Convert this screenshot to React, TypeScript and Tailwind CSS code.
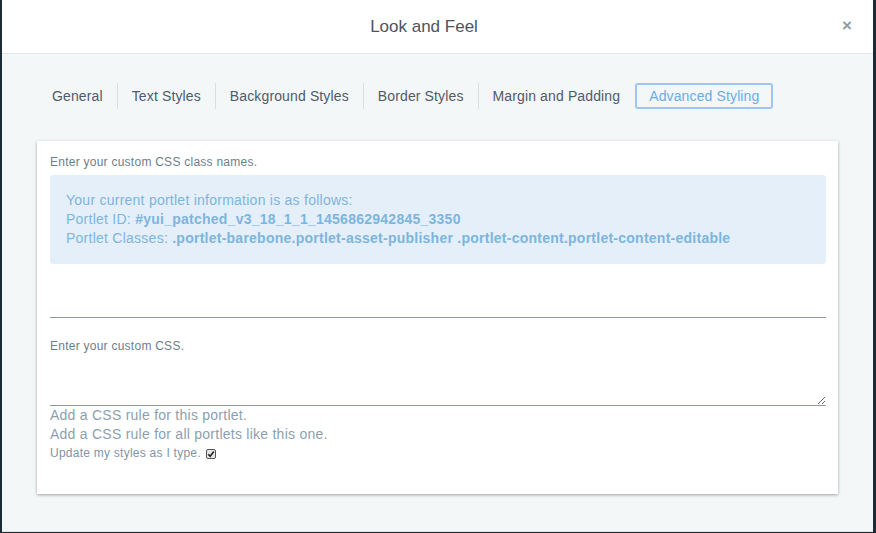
import React from 'react';

const tabs = ['General', 'Text Styles', 'Background Styles', 'Border Styles', 'Margin and Padding'];

const CheckMark: React.FC = () => (
  <span className="ml-[5px] inline-flex h-[10px] w-[10px] items-center justify-center rounded-[2px] border border-[#555] bg-[#e6e6e6] align-middle">
    <svg width="8" height="8" viewBox="0 0 8 8">
      <path d="M1.2 4.2 L3.2 6.2 L6.8 1.4" fill="none" stroke="#222" strokeWidth="1.6" />
    </svg>
  </span>
);

const App: React.FC = () => {
  return (
    <div
      className="flex h-[533px] w-[876px] bg-[#1c2b36] pl-[2px] pr-[3px]"
      style={{ fontFamily: '"Liberation Sans", Arial, sans-serif' }}
    >
      <div className="flex h-[532px] flex-1 flex-col border-b border-[#dde2e5] bg-[#f4f7f8]">
        {/* header */}
        <div className="relative flex h-[54px] items-center border-b border-[#e3e6e8] bg-white">
          <h2 className="flex-1 pr-[27px] text-center text-[17px] text-[#4b5560]">Look and Feel</h2>
          <button className="absolute right-[21px] top-[17px] text-[17px] font-bold leading-none text-[#8e9ba7]">
            ×
          </button>
        </div>

        {/* body */}
        <div className="flex flex-1 flex-col px-[35px] tracking-[0.25px]">
          <div className="ml-px mt-[29px] flex h-[26px] items-stretch text-[14px] tracking-[0.13px] text-[#4f5b67]">
            {tabs.map((t, i) => (
              <div
                key={t}
                className={`flex items-center px-[14px] ${i > 0 ? 'border-l border-[#d9dee2]' : ''}`}
              >
                {t}
              </div>
            ))}
            <div className="ml-px flex items-center rounded-[3px] border-2 border-[#9fc6f3] px-[12px] text-[#68ade9]">
              Advanced Styling
            </div>
          </div>

          <div className="mt-[32px] h-[353px] bg-white pl-[13px] pr-[12px] pt-[14px] shadow-[0_1px_3px_rgba(0,0,0,0.35)]">
            <div className="text-[12px] leading-[15px] text-[#6d7e8d]">Enter your custom CSS class names.</div>

            <div className="mt-[5px] rounded-[3px] bg-[#e4eff9] px-[16px] py-[16px] text-[14px] leading-[19px] text-[#7db5de]">
              <div>Your current portlet information is as follows:</div>
              <div>
                Portlet ID: <span className="font-bold">#yui_patched_v3_18_1_1_1456862942845_3350</span>
              </div>
              <div>
                Portlet Classes:{' '}
                <span className="font-bold">
                  .portlet-barebone.portlet-asset-publisher .portlet-content.portlet-content-editable
                </span>
              </div>
            </div>

            <input
              type="text"
              className="mt-[19px] block h-[35px] w-full border-0 border-b border-[#8e9ba7] bg-transparent outline-none"
            />

            <div className="mt-[21px] text-[12px] leading-[15px] text-[#6d7e8d]">Enter your custom CSS.</div>

            <textarea className="block h-[52px] w-full resize-y border-0 border-b border-[#8e9ba7] bg-transparent outline-none" />

            <div className="text-[14px] leading-[19px] text-[#8c9fb0]">
              <div>Add a CSS rule for this portlet.</div>
              <div>Add a CSS rule for all portlets like this one.</div>
              <div className="flex items-center text-[12px] text-[#7f94a6]">
                Update my styles as I type.
                <CheckMark />
              </div>
            </div>
          </div>
        </div>
      </div>
    </div>
  );
};

export default App;
